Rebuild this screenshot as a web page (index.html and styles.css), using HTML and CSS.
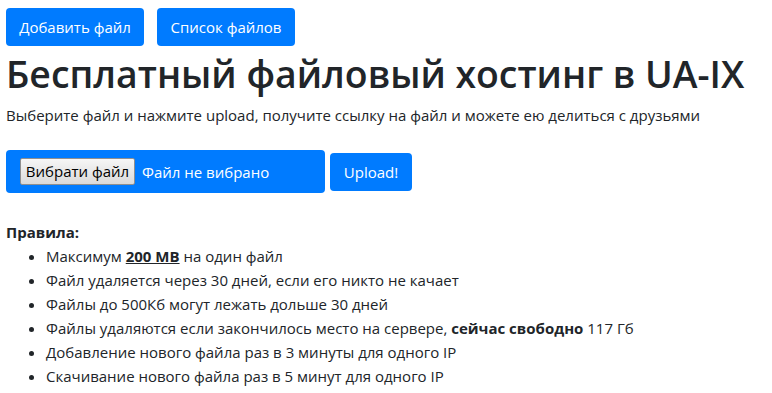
FILE: index.html
```html
<!DOCTYPE html>
<html lang="ru">
<head>
<meta charset="utf-8">
<title>UA-IX хостинг</title>
<link rel="stylesheet" href="styles.css">
</head>
<body>
<div class="page">
  <nav class="top">
    <a class="btn" href="#">Добавить файл</a>
    <a class="btn" href="#">Список файлов</a>
  </nav>
  <h1 class="title">Бесплатный файловый хостинг в UA-IX</h1>
  <p class="lead">Выберите файл и нажмите upload, получите ссылку на файл и можете ею делиться с друзьями</p>
  <form class="upload">
    <label class="filebox">
      <span class="choose">Вибрати файл</span>
      <span class="nofile">Файл не вибрано</span>
    </label>
    <button type="button" class="btn btn-up">Upload!</button>
  </form>
  <div class="rules">
    <b class="rules-title">Правила:</b>
    <ul class="list">
      <li>Максимум <u class="strong">200 MB</u> на один файл</li>
      <li>Файл удаляется через 30 дней, если его никто не качает</li>
      <li>Файлы до 500Кб могут лежать дольше 30 дней</li>
      <li>Файлы удаляются если закончилось место на сервере, <b class="strong">сейчас свободно</b> 117 Гб</li>
      <li>Добавление нового файла раз в 3 минуты для одного IP</li>
      <li>Скачивание нового файла раз в 5 минут для одного IP</li>
    </ul>
  </div>
</div>
</body>
</html>
```
FILE: styles.css
```css
html, body {
  margin: 0;
  padding: 0;
  background: #fff;
}
body {
  font-family: "Open Sans", "Noto Sans", sans-serif;
  font-size: 15px;
  line-height: 24px;
  color: #212529;
}
.page {
  padding: 8px 6px;
}
.top {
  display: flex;
  gap: 13px;
}
.btn {
  display: inline-flex;
  align-items: center;
  justify-content: center;
  box-sizing: border-box;
  height: 38px;
  padding: 0 8px;
  border: 0;
  border-radius: 4px;
  background: #007bff;
  color: #fff;
  font: inherit;
  text-decoration: none;
  white-space: nowrap;
}
.top .btn {
  width: 138px;
}
.title {
  margin: 4px 0 5px;
  font-size: 37.4px;
  font-weight: 600;
  line-height: 48px;
  white-space: nowrap;
}
.lead {
  margin: 0 0 23px;
}
.upload {
  display: flex;
  align-items: center;
  gap: 5px;
}
.filebox {
  display: flex;
  align-items: center;
  box-sizing: border-box;
  width: 319px;
  height: 43px;
  padding: 0 14px;
  background: #007bff;
  border-radius: 4px;
  color: #fff;
}
.choose {
  box-sizing: border-box;
  width: 115px;
  height: 27px;
  padding: 0 3px;
  border: 1px solid #8f8f8f;
  border-radius: 2px;
  background: linear-gradient(#f6f6f6, #dadada);
  color: #000;
  line-height: 25px;
  text-align: center;
  margin-right: 7px;
  white-space: nowrap;
}
.nofile {
  white-space: nowrap;
}
.btn-up {
  width: 82px;
}
.rules {
  margin-top: 27px;
}
.rules-title {
  display: block;
  font-weight: 700;
}
.list {
  margin: 0;
  padding-left: 40px;
}
.strong {
  font-weight: 700;
}
```
